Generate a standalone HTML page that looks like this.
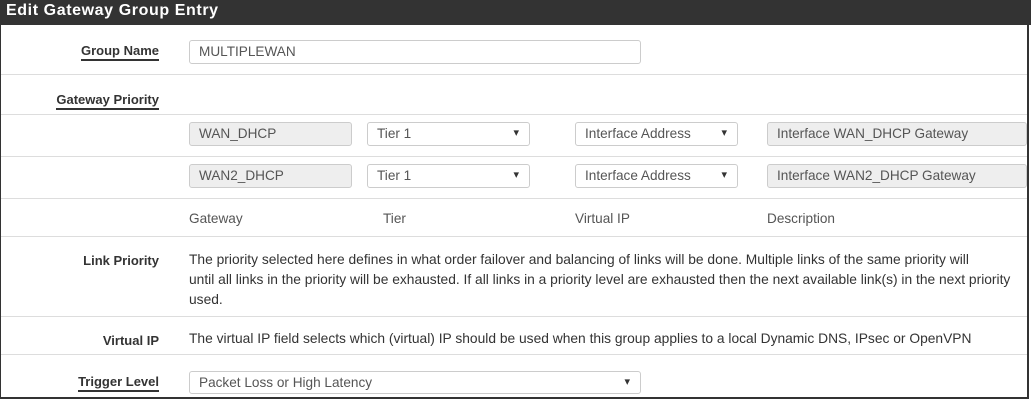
<!DOCTYPE html><html><head><style>
*{margin:0;padding:0;box-sizing:border-box}
body{width:1031px;height:400px;background:#fff;font-family:"Liberation Sans",sans-serif;font-size:13.6px;color:#333;position:relative;overflow:hidden}
.a{position:absolute}
.hd{left:0;top:0;width:1031px;height:25px;background:#333;color:#fff;font-weight:bold;font-size:16px;padding:2px 0 0 6px;letter-spacing:0.6px}
.frame{left:0;top:25px;width:1029px;height:374px;border-left:1px solid #333;border-right:2px solid #333;border-bottom:2px solid #333}
.ln{left:1px;width:1026px;height:1px;background:#ddd}
.lb{right:872px;font-weight:bold;text-align:right;white-space:nowrap;font-size:13px}
.u{border-bottom:2px solid #333;padding-bottom:1px}
.in{height:24px;border:1px solid #ccc;border-radius:3px;padding:3px 9px;white-space:nowrap;color:#555}
.g{background:#eee}
.sel:after{content:"▾";position:absolute;right:10px;top:3px;font-size:11px;color:#333}
.t{left:189px;white-space:nowrap;font-size:13.8px}
</style></head><body>
<div class="a hd">Edit Gateway Group Entry</div>
<div class="a frame"></div>
<div class="a ln" style="top:74px"></div>
<div class="a ln" style="top:114px"></div>
<div class="a ln" style="top:156px"></div>
<div class="a ln" style="top:198px"></div>
<div class="a ln" style="top:236px"></div>
<div class="a ln" style="top:316px"></div>
<div class="a ln" style="top:354px"></div>

<div class="a lb" style="top:43px"><span class="u">Group Name</span></div>
<div class="a in" style="left:189px;top:40px;width:452px">MULTIPLEWAN</div>

<div class="a lb" style="top:92px"><span class="u">Gateway Priority</span></div>

<div class="a in g" style="left:189px;top:122px;width:163px">WAN_DHCP</div>
<div class="a in sel" style="left:367px;top:122px;width:163px">Tier 1</div>
<div class="a in sel" style="left:575px;top:122px;width:163px">Interface Address</div>
<div class="a in g" style="left:767px;top:122px;width:260px">Interface WAN_DHCP Gateway</div>

<div class="a in g" style="left:189px;top:164px;width:163px">WAN2_DHCP</div>
<div class="a in sel" style="left:367px;top:164px;width:163px">Tier 1</div>
<div class="a in sel" style="left:575px;top:164px;width:163px">Interface Address</div>
<div class="a in g" style="left:767px;top:164px;width:260px">Interface WAN2_DHCP Gateway</div>

<div class="a" style="left:189px;top:211px;color:#555">Gateway</div>
<div class="a" style="left:383px;top:211px;color:#555">Tier</div>
<div class="a" style="left:575px;top:211px;color:#555">Virtual IP</div>
<div class="a" style="left:767px;top:211px;color:#555">Description</div>

<div class="a lb" style="top:253px">Link Priority</div>
<div class="a t" style="top:250px;line-height:20px">The priority selected here defines in what order failover and balancing of links will be done. Multiple links of the same priority will<br>until all links in the priority will be exhausted. If all links in a priority level are exhausted then the next available link(s) in the next priority<br>used.</div>

<div class="a lb" style="top:333px">Virtual IP</div>
<div class="a t" style="top:331px">The virtual IP field selects which (virtual) IP should be used when this group applies to a local Dynamic DNS, IPsec or OpenVPN</div>

<div class="a lb" style="top:374px"><span class="u">Trigger Level</span></div>
<div class="a in sel" style="left:189px;top:371px;width:452px;height:23px;padding-top:3px">Packet Loss or High Latency</div>
</body></html>
